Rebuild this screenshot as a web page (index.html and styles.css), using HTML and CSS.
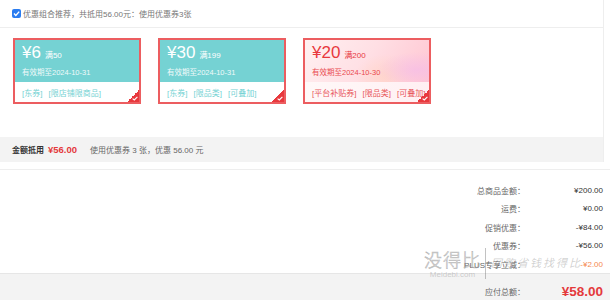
FILE: index.html
```html
<!DOCTYPE html>
<html lang="zh-CN">
<head>
    <meta charset="UTF-8">
    <title>优惠券结算</title>
    <link rel="stylesheet" href="styles.css">
</head>
<body>
    <div class="coupon-panel">
        <div class="combo-row">
            <span class="check">
                <svg width="9" height="9" viewBox="0 0 9 9"><path d="M2 4.6 L3.8 6.4 L7.2 2.6" fill="none" stroke="#fff" stroke-width="1.4"/></svg>
            </span>
            <span>优惠组合推荐，共抵用56.00元：使用优惠券3张</span>
        </div>

        <div class="coupon-list">
            <div class="coupon coupon-jd">
                <div class="coupon-top">
                    <div class="coupon-price"><span class="amount">¥6</span><span class="limit">满50</span></div>
                    <div class="coupon-date">有效期至2024-10-31</div>
                </div>
                <div class="coupon-tags"><span>[东券]</span><span>[限店铺限商品]</span></div>
                <span class="corner"><svg width="6" height="5" viewBox="0 0 6 5"><path d="M0.6 2.6 L2.3 4 L5.4 0.8" fill="none" stroke="#fff" stroke-width="1.1"/></svg></span>
            </div>

            <div class="coupon coupon-jd">
                <div class="coupon-top">
                    <div class="coupon-price"><span class="amount">¥30</span><span class="limit">满199</span></div>
                    <div class="coupon-date">有效期至2024-10-31</div>
                </div>
                <div class="coupon-tags"><span>[东券]</span><span>[限品类]</span><span>[可叠加]</span></div>
                <span class="corner"><svg width="6" height="5" viewBox="0 0 6 5"><path d="M0.6 2.6 L2.3 4 L5.4 0.8" fill="none" stroke="#fff" stroke-width="1.1"/></svg></span>
            </div>

            <div class="coupon coupon-platform">
                <div class="coupon-top">
                    <div class="coupon-price"><span class="amount">¥20</span><span class="limit">满200</span></div>
                    <div class="coupon-date">有效期至2024-10-30</div>
                </div>
                <div class="coupon-tags"><span>[平台补贴券]</span><span>[限品类]</span><span>[可叠加]</span></div>
                <span class="corner"><svg width="6" height="5" viewBox="0 0 6 5"><path d="M0.6 2.6 L2.3 4 L5.4 0.8" fill="none" stroke="#fff" stroke-width="1.1"/></svg></span>
            </div>
        </div>

        <div class="discount-bar">
            <span class="discount-label">金额抵用</span>
            <span class="discount-price">¥56.00</span>
            <span class="discount-info">使用优惠券 3 张，优惠 56.00 元</span>
        </div>
    </div>

    <div class="summary">
        <div class="summary-list">
            <span class="label">总商品金额：</span><span class="value">¥200.00</span>
            <span class="label">运费：</span><span class="value">¥0.00</span>
            <span class="label">促销优惠：</span><span class="value">-¥84.00</span>
            <span class="label">优惠券：</span><span class="value">-¥56.00</span>
            <span class="label">PLUS专享立减：</span><span class="value orange">-¥2.00</span>
        </div>

        <div class="watermark">
            <div class="wm-brand">
                <span class="wm-logo">没得比</span>
                <span class="wm-site">Meidebi.com</span>
            </div>
            <span class="wm-slogan">网购省钱找得比</span>
        </div>
    </div>

    <div class="total-bar">
        <span class="label">应付总额：</span>
        <span class="total-price">¥58.00</span>
    </div>
</body>
</html>
```

FILE: styles.css
```css
* {
    margin: 0;
    padding: 0;
    box-sizing: border-box;
}

body {
    font-family: 'Liberation Sans', 'Noto Sans CJK SC', sans-serif;
    font-size: 8px;
    color: #666;
    background: white;
    width: 610px;
    height: 301px;
    overflow: hidden;
}

.coupon-panel {
    width: 604px;
    border-right: 1px solid #eee;
}

.combo-row {
    height: 28px;
    padding-left: 12px;
    display: flex;
    align-items: center;
    gap: 2px;
    border-bottom: 1px solid #eee;
    color: #777;
}

.check {
    width: 9px;
    height: 9px;
    background: #2a7cf0;
    border-radius: 2px;
    display: flex;
}

.coupon-list {
    display: flex;
    gap: 17px;
    padding: 10px 0 33px 13px;
}

.coupon {
    width: 128px;
    height: 66px;
    border: 2px solid #ec5d60;
    position: relative;
    overflow: hidden;
    display: flex;
    flex-direction: column;
}

.coupon-top {
    height: 42px;
    padding: 3px 0 0 7px;
    color: white;
}

.coupon-jd .coupon-top {
    background: #75d2d3;
}

.coupon-platform .coupon-top {
    color: #e8383d;
    background:
        radial-gradient(ellipse 40px 18px at 112px 30px, rgba(246, 190, 230, 0.8), rgba(246, 190, 230, 0) 100%),
        radial-gradient(ellipse 30px 22px at 80px 36px, rgba(255, 214, 196, 0.7), rgba(255, 214, 196, 0) 100%),
        linear-gradient(120deg, #fff0f1 0%, #ffdfe4 50%, #ffc6d2 100%);
}

.coupon-platform {
    background: linear-gradient(90deg, #fff8f8, #fff0f3);
}

.coupon-price {
    display: flex;
    align-items: baseline;
    gap: 4px;
    height: 20px;
}

.amount {
    font-size: 17px;
}

.limit {
    font-size: 8px;
}

.coupon-date {
    font-size: 7.5px;
    margin-top: 3px;
    opacity: 0.9;
}

.coupon-tags {
    flex: 1;
    display: flex;
    align-items: center;
    gap: 6px;
    padding-left: 7px;
    font-size: 8px;
    white-space: nowrap;
    color: #75d2d3;
}

.coupon-platform .coupon-tags {
    color: #e8585c;
}

.corner {
    position: absolute;
    right: 0;
    bottom: 0;
    width: 12px;
    height: 12px;
    background: linear-gradient(135deg, transparent 50%, #e8383d 50%);
    display: flex;
    align-items: flex-end;
    justify-content: flex-end;
    padding: 0 1px 1px 0;
}

.discount-bar {
    height: 25px;
    background: #f3f3f3;
    display: flex;
    align-items: center;
    padding-left: 12px;
}

.discount-label {
    color: #333;
    font-weight: bold;
}

.discount-price {
    color: #e4393c;
    font-weight: bold;
    font-size: 9.5px;
    margin-left: 4px;
}

.discount-info {
    margin-left: 13px;
}

.summary {
    margin-top: 7px;
    border-top: 1px solid #eee;
    height: 104px;
    padding-top: 11px;
    position: relative;
}

.summary-list {
    display: grid;
    grid-template-columns: 1fr 78px;
    grid-auto-rows: 18.5px;
    align-items: center;
    padding-right: 7px;
}

.summary-list .label,
.total-bar .label {
    text-align: right;
    color: #666;
}

.summary-list .value {
    text-align: right;
    color: #333;
}

.summary-list .orange {
    color: #f5884f;
}

.watermark {
    position: absolute;
    left: 424px;
    top: 78px;
    display: flex;
    align-items: center;
    gap: 5px;
    color: rgba(140, 140, 140, 0.4);
}

.wm-brand {
    display: flex;
    flex-direction: column;
    align-items: center;
    padding-right: 4px;
    border-right: 1px solid rgba(120, 120, 120, 0.45);
}

.wm-logo {
    font-family: 'Noto Sans CJK SC', sans-serif;
    font-size: 18px;
    line-height: 22px;
    font-weight: 300;
    letter-spacing: 1px;
    color: rgba(255, 255, 255, 0.3);
    -webkit-text-stroke: 0.6px rgba(120, 120, 120, 0.55);
}

.wm-site {
    font-size: 8px;
    line-height: 9px;
}

.wm-slogan {
    font-size: 11px;
    font-style: italic;
    letter-spacing: 2px;
    margin-top: -4px;
}

.total-bar {
    height: 27px;
    background: #f3f3f3;
    border-top: 1px solid #e6e6e6;
    display: grid;
    grid-template-columns: 1fr 78px;
    align-items: center;
    padding: 9px 7px 0 0;
}

.total-price {
    text-align: right;
    color: #e4393c;
    font-weight: bold;
    font-size: 13.5px;
}
```
